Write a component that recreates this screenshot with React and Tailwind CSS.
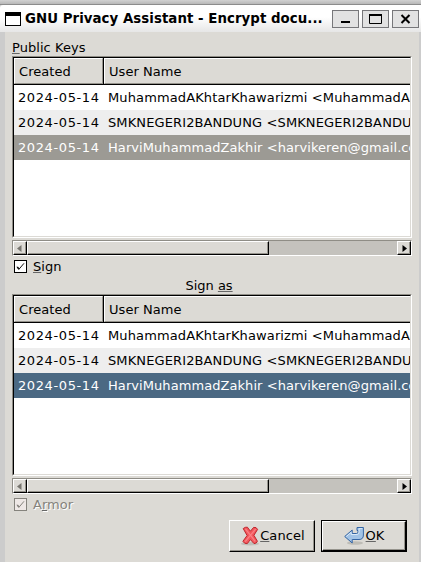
import React from 'react';

const keys = [
  { date: '2024-05-14', name: 'MuhammadAKhtarKhawarizmi <MuhammadAkhtar@gmail.com>', fit: 'tracking-[0.12px]' },
  { date: '2024-05-14', name: 'SMKNEGERI2BANDUNG <SMKNEGERI2BANDUNG@gmail.com>', fit: 'tracking-[0.12px]' },
  { date: '2024-05-14', name: 'HarviMuhammadZakhir <harvikeren@gmail.com>', fit: 'tracking-[0.07px]' },
];

function HeaderCell({ children, className }) {
  return (
    <div className={`h-[26px] shrink-0 border-l border-t border-white border-b border-b-[#95938c] pl-1 leading-[25px] tracking-[0.05px] ${className}`}>
      {children}
    </div>
  );
}

function KeyList({ selected }) {
  return (
    <div className="h-[182px] border-t border-l border-t-[#8f8d86] border-l-[#8f8d86] border-r border-b border-r-white border-b-white">
      <div className="h-[180px] overflow-hidden border-t border-l border-t-black border-l-black border-r border-b border-r-[#dcdad5] border-b-[#dcdad5] bg-white">
        <div className="flex border-b border-black bg-[#dcdad5]">
          <HeaderCell className="w-[89px] border-r border-r-[#95938c]">Created</HeaderCell>
          <div className="w-px bg-black" />
          <HeaderCell className="flex-1">User Name</HeaderCell>
        </div>
        {keys.map((key, i) => (
          <div
            key={key.name}
            className={`flex h-[25px] overflow-hidden whitespace-nowrap pl-1 leading-[25px] ${i === 2 ? `${selected} text-white` : i === 1 ? 'bg-[#eeeeee]' : 'bg-white'}`}
          >
            <span className="w-[90px] shrink-0 tracking-[0.6px]">{key.date}</span>
            <span className={key.fit}>{key.name}</span>
          </div>
        ))}
      </div>
    </div>
  );
}

function Raised({ className, children }) {
  return (
    <div className={`flex h-[14px] items-center justify-center border-t border-l border-t-white border-l-white border-r border-b border-r-black border-b-black bg-[#dcdad5] shadow-[inset_-1px_-1px_0_#95938c] ${className}`}>
      {children}
    </div>
  );
}

function ScrollBar() {
  return (
    <div className="mt-[2px] flex h-4 border-t border-l border-t-[#8f8d86] border-l-[#8f8d86] border-r border-b border-r-white border-b-white bg-[#c4c2bd]">
      <Raised className="w-[14px]">
        <svg width="5" height="7" viewBox="0 0 5 7" className="mr-px"><path d="M4.5 0v7L0 3.5z" fill="#77756f" /></svg>
      </Raised>
      <Raised className="w-[242px]" />
      <div className="flex-1" />
      <Raised className="w-[14px]">
        <svg width="5" height="7" viewBox="0 0 5 7"><path d="M.5 0v7L5 3.5z" fill="#000" /></svg>
      </Raised>
    </div>
  );
}

function Check({ disabled }) {
  return (
    <span className={`flex size-[13px] items-center justify-center border ${disabled ? 'border-[#85837d] bg-[#eee8e6]' : 'border-black bg-white'}`}>
      <svg width="9" height="9" viewBox="0 0 9 9" fill="none" stroke={disabled ? '#85837d' : '#111'}>
        <path d="M1 4.8l2 2.4L8 1.3" strokeWidth="1" />
        <path d="M1.2 5l2 2.2" strokeWidth="1.6" />
      </svg>
    </span>
  );
}

function Mnemonic({ children }) {
  return <span className="underline decoration-1 decoration-[#666] underline-offset-1">{children}</span>;
}

function WindowButton({ children }) {
  return (
    <div className="flex h-[18px] w-[27px] items-center justify-center border border-[#77777a] bg-[#e2e2e2]">
      <svg width="13" height="10" viewBox="0 0 13 10" fill="none" stroke="#000">{children}</svg>
    </div>
  );
}

function CancelIcon() {
  return (
    <svg width="20" height="20" viewBox="0 0 20 20" className="shrink-0">
      <ellipse cx="9" cy="17.8" rx="9" ry="1.7" fill="#aaa8a2" opacity=".55" />
      <path d="M2.2 2.6Q4.2 .8 6.4 1.2L9.4 5.2 12.6 1.4Q15.4 .8 16.6 3.4L12.9 9.3 16.4 15.2Q15.8 17.6 13 17.6L9.4 13.6 6.2 17.7Q3.2 17.9 1.9 15.3L6.1 9.5z" fill="#f3575d" stroke="#bd262c" strokeLinejoin="round" />
      <path d="M4.5 3L9.5 9.2 4.2 15.6M14.6 3.2L9.5 9.2l4.7 6.2" fill="none" stroke="#f98286" strokeWidth="1.2" />
    </svg>
  );
}

function OkIcon() {
  return (
    <svg width="20" height="20" viewBox="0 0 20 20" className="shrink-0">
      <ellipse cx="11" cy="17" rx="8" ry="1.8" fill="#aaa8a2" opacity=".6" />
      <path d="M.7 10.5L8.2 4V7.5H12.5Q14 7.5 14 6V4.5H13V1.5H19.4V9Q19.4 13.5 15 13.5H8.2V17z" fill="#a2c3e6" stroke="#3465a4" strokeLinejoin="round" />
      <path d="M2.3 10.5l4.9-4.2v2.2h6.1q1.8-.2 1.8-2.5V2.6h3.2" fill="none" stroke="#dceaf7" />
    </svg>
  );
}

export default function App() {
  return (
    <div className="flex h-[562px] w-[421px] flex-col overflow-hidden bg-[#cccccc] font-['DejaVu_Sans',sans-serif] text-[13px] text-black">
      <div className="h-[5px] border-b border-[#8c8c8c] bg-linear-to-b from-[#d2d2d2] to-[#b8b8b8]" />
      <div className="flex h-[27px] items-center rounded-tl-[3px] bg-linear-to-b from-white from-45% to-[#e6e6e6] pl-[5px]">
        <div className="h-[14px] w-4 border border-t-4 border-black bg-white" />
        <div className="ml-1 w-[302px] whitespace-nowrap text-[13.33px] font-bold leading-[26px] tracking-[0.05px]">GNU Privacy Assistant - Encrypt docu...</div>
        <div className="ml-[5px] flex gap-[3px]">
          <WindowButton><path d="M2 8h9" strokeWidth="2" /></WindowButton>
          <WindowButton><path d="M.5 0v9.5h12V0" /><path d="M0 1h13" strokeWidth="2" /></WindowButton>
          <WindowButton><path d="M2.5 1l8 8M10.5 1l-8 8" strokeWidth="2" /></WindowButton>
        </div>
      </div>
      <div className="mr-[2px] ml-[5px] flex-1 bg-[#dcdad5] pr-[7px] pl-[7px]">
        <div className="h-6 pt-[6px] leading-5 tracking-[0.05px]"><Mnemonic>P</Mnemonic>ublic Keys</div>
        <KeyList selected="bg-[#9c9a94]" />
        <ScrollBar />
        <div className="flex h-[19px] items-center gap-[6px] pl-[2px] pt-[2px]">
          <Check />
          <span><Mnemonic>S</Mnemonic>ign</span>
        </div>
        <div className="h-[19px] pr-[6px] pt-px text-center leading-5">Sign <Mnemonic>as</Mnemonic></div>
        <KeyList selected="bg-[#4b6983]" />
        <ScrollBar />
        <div className="flex h-[19px] items-center gap-[6px] pl-[2px] pt-[2px] text-[#85837d]">
          <Check disabled />
          <span className="[text-shadow:1px_1px_0_white]">A<Mnemonic>r</Mnemonic>mor</span>
        </div>
        <div className="mt-[7px] flex justify-end gap-[6px] pr-[5px]">
          <div className="flex h-8 w-[86px] items-center justify-center border-t border-l border-t-white border-l-white border-r border-b border-r-black border-b-black pl-[2px] shadow-[inset_-1px_-1px_0_#95938c]">
            <CancelIcon /><span className="-ml-px tracking-[0.1px]"><Mnemonic>C</Mnemonic>ancel</span>
          </div>
          <div className="h-8 w-[86px] border border-black">
            <div className="flex h-[30px] items-center justify-center border-t border-l border-t-white border-l-white border-r border-b border-r-black border-b-black shadow-[inset_-1px_-1px_0_#95938c]">
              <OkIcon /><span className="ml-[2px]"><Mnemonic>O</Mnemonic>K</span>
            </div>
          </div>
        </div>
      </div>
    </div>
  );
}
